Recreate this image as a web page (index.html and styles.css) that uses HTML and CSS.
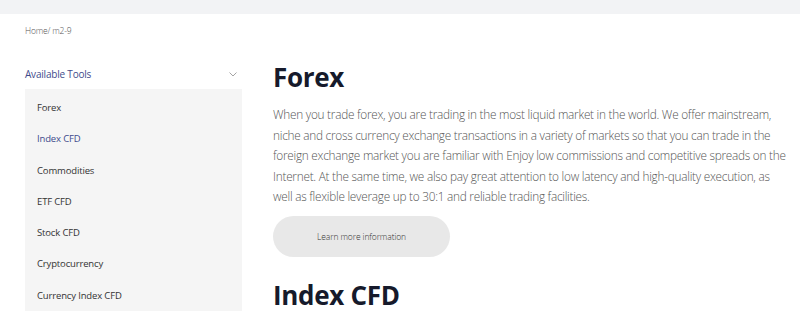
FILE: index.html
```html
<!DOCTYPE html>
<html lang="en">
<head>
<meta charset="utf-8">
<title>m2-9</title>
<link rel="stylesheet" href="styles.css">
</head>
<body>
<div class="topbar"></div>
<div class="page">
  <div class="crumb">Home/ m2-9</div>
  <div class="layout">
    <aside class="sidebar">
      <div class="side-head">
        <span>Available Tools</span>
        <svg class="chev" width="8" height="5" viewBox="0 0 8 5"><path d="M0.5 0.5 L4 4 L7.5 0.5" fill="none" stroke="#9a9a9a" stroke-width="0.9"/></svg>
      </div>
      <ul class="menu">
        <li>Forex</li>
        <li class="active">Index CFD</li>
        <li>Commodities</li>
        <li>ETF CFD</li>
        <li>Stock CFD</li>
        <li>Cryptocurrency</li>
        <li>Currency Index CFD</li>
      </ul>
    </aside>
    <main class="main">
      <section class="block">
        <h1>Forex</h1>
        <p>When you trade forex, you are trading in the most liquid market in the world. We offer mainstream, niche and cross currency exchange transactions in a variety of markets so that you can trade in the foreign exchange market you are familiar with Enjoy low commissions and competitive spreads on the Internet. At the same time, we also pay great attention to low latency and high-quality execution, as well as flexible leverage up to 30:1 and reliable trading facilities.</p>
        <button class="more">Learn more information</button>
      </section>
      <section class="block">
        <h1>Index CFD</h1>
      </section>
    </main>
  </div>
</div>
</body>
</html>
```
FILE: styles.css
```css
* { box-sizing: border-box; }
html, body { margin: 0; padding: 0; background: #fff; }
body {
  font-family: "Open Sans", "Noto Sans", sans-serif;
  color: #333;
  overflow: hidden;
  height: 313px;
}
.topbar { height: 14px; background: #f2f3f5; }
.page { padding: 0 10px 0 25px; }
.crumb {
  font-size: 8.5px;
  font-weight: 300;
  color: #555;
  line-height: 12px;
  margin-top: 11px;
  letter-spacing: -0.2px;
}
.layout { display: flex; gap: 31px; margin-top: 22px; }
.sidebar { width: 217px; flex: none; }
.side-head {
  display: flex;
  align-items: center;
  justify-content: space-between;
  height: 30px;
  padding-right: 5px;
  font-size: 10px;
  color: #3f4b8c;
  letter-spacing: -0.2px;
}
.chev { display: block; }
.menu {
  list-style: none;
  margin: 0;
  padding: 3px 0 0;
  background: #f5f5f5;
}
.menu li {
  height: 31.3px;
  line-height: 31.3px;
  padding-left: 12px;
  font-size: 9.5px;
  color: #333;
  letter-spacing: -0.15px;
}
.menu li.active { color: #3f4b8c; }
.main { flex: 1; min-width: 0; }
.block h1 {
  margin: 0;
  font-size: 26px;
  font-weight: 700;
  color: #161a2b;
  line-height: 36px;
  letter-spacing: -0.3px;
}
.block p {
  margin: 9px 0 0;
  font-size: 11.8px;
  font-weight: 300;
  line-height: 20.5px;
  letter-spacing: -0.25px;
  color: #555;
  max-width: 517px;
}
.more {
  display: block;
  margin-top: 9px;
  width: 177px;
  height: 41px;
  border: none;
  border-radius: 21px;
  background: #e8e8e8;
  font-family: inherit;
  font-size: 8.5px;
  font-weight: 300;
  letter-spacing: -0.1px;
  color: #333;
}
.block + .block { margin-top: 20px; }
```
